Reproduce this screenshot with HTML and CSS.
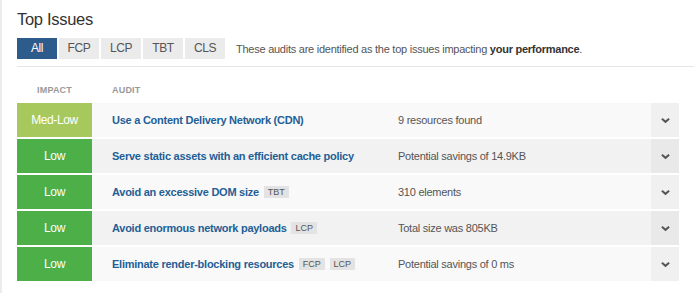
FILE: index.html
```html
<!DOCTYPE html>
<html lang="en">
<head>
    <meta charset="UTF-8">
    <meta name="viewport" content="width=device-width, initial-scale=1.0">
    <title>Top Issues</title>
    <link rel="stylesheet" href="styles.css">
</head>
<body>

    <!-- Top Issues panel -->
    <div class="panel">
        <h2>Top Issues</h2>

        <div class="filters">
            <div class="tabs">
                <span class="tab active">All</span>
                <span class="tab">FCP</span>
                <span class="tab">LCP</span>
                <span class="tab">TBT</span>
                <span class="tab">CLS</span>
            </div>
            <p class="note">These audits are identified as the top issues impacting <b>your performance</b>.</p>
        </div>

        <div class="divider"></div>

        <div class="issues">
            <div class="issue head">
                <span class="impact">Impact</span>
                <span class="audit">Audit</span>
                <span></span>
                <span></span>
            </div>

            <div class="issue">
                <span class="impact med-low">Med-Low</span>
                <span class="audit">Use a Content Delivery Network (CDN)</span>
                <span class="info">9 resources found</span>
                <span class="toggle"><svg viewBox="0 0 10 7"><path d="M1 1.5 L5 5 L9 1.5"/></svg></span>
            </div>

            <div class="issue">
                <span class="impact low">Low</span>
                <span class="audit">Serve static assets with an efficient cache policy</span>
                <span class="info">Potential savings of 14.9KB</span>
                <span class="toggle"><svg viewBox="0 0 10 7"><path d="M1 1.5 L5 5 L9 1.5"/></svg></span>
            </div>

            <div class="issue">
                <span class="impact low">Low</span>
                <span class="audit">Avoid an excessive DOM size <i class="chip">TBT</i></span>
                <span class="info">310 elements</span>
                <span class="toggle"><svg viewBox="0 0 10 7"><path d="M1 1.5 L5 5 L9 1.5"/></svg></span>
            </div>

            <div class="issue">
                <span class="impact low">Low</span>
                <span class="audit">Avoid enormous network payloads <i class="chip">LCP</i></span>
                <span class="info">Total size was 805KB</span>
                <span class="toggle"><svg viewBox="0 0 10 7"><path d="M1 1.5 L5 5 L9 1.5"/></svg></span>
            </div>

            <div class="issue">
                <span class="impact low">Low</span>
                <span class="audit">Eliminate render-blocking resources <i class="chip">FCP</i> <i class="chip">LCP</i></span>
                <span class="info">Potential savings of 0 ms</span>
                <span class="toggle"><svg viewBox="0 0 10 7"><path d="M1 1.5 L5 5 L9 1.5"/></svg></span>
            </div>
        </div>
    </div>

</body>
</html>
```

FILE: styles.css
```css
* {
    margin: 0;
    padding: 0;
    box-sizing: border-box;
    font-family: "Liberation Sans", Arial, sans-serif;
}
body {
    background: #fff;
    color: #333;
}

/* Panel */
.panel {
    border-left: 2px solid #ececec;
    min-height: 293px;
    padding: 8px 0 0 15px;
}
h2 {
    font-size: 16.5px;
    font-weight: normal;
    letter-spacing: -0.3px;
    color: #333;
    line-height: 22px;
    margin-bottom: 8px;
}

/* Filter tabs */
.filters {
    display: flex;
    align-items: center;
    gap: 11px;
}
.tabs {
    display: flex;
    gap: 2px;
}
.tab {
    width: 40px;
    height: 21px;
    line-height: 21px;
    text-align: center;
    font-size: 12px;
    letter-spacing: -0.4px;
    color: #555;
    background: #ebebeb;
}
.tab.active {
    background: #2c5b8c;
    color: #fff;
}
.note {
    font-size: 11px;
    letter-spacing: -0.25px;
    color: #555;
}
.note b {
    color: #333;
}
.divider {
    height: 1px;
    background: #e6e6e6;
    margin-top: 7px;
}

/* Issues table */
.issues {
    width: 662px;
    display: flex;
    flex-direction: column;
    gap: 2px;
}
.issue {
    display: grid;
    grid-template-columns: 75px 286px 1fr 28px;
    height: 34px;
    align-items: center;
    background: #f9f9f9;
    font-size: 11px;
    letter-spacing: -0.25px;
}
.issue:nth-child(odd) {
    background: #f2f2f2;
}
.issue.head {
    background: #fff;
    height: 34px;
    align-items: end;
    padding-bottom: 6px;
    font-size: 9px;
    font-weight: bold;
    color: #999;
    text-transform: uppercase;
    letter-spacing: 0.2px;
}
.impact {
    height: 100%;
    display: flex;
    align-items: center;
    justify-content: center;
    font-size: 12px;
    letter-spacing: -0.4px;
    color: #fff;
}
.head .impact {
    height: auto;
    font-size: 9px;
    letter-spacing: 0.2px;
    color: #999;
}
.med-low { background: #a6c85c; }
.low { background: #4caf48; }
.audit {
    padding-left: 20px;
    font-weight: bold;
    color: #235f96;
    white-space: nowrap;
}
.head .audit {
    color: #999;
}
.chip {
    display: inline-block;
    font-style: normal;
    font-weight: normal;
    font-size: 9px;
    letter-spacing: 0;
    color: #555;
    background: #e3e3e3;
    padding: 1px 4px;
    margin-left: 2px;
    vertical-align: 1px;
}
.info {
    padding-left: 20px;
    color: #555;
}
.toggle {
    height: 100%;
    display: flex;
    align-items: center;
    justify-content: center;
    background: rgba(0, 0, 0, 0.035);
}
.head .toggle { background: none; }
.toggle svg {
    width: 9px;
    height: 7px;
    fill: none;
    stroke: #555;
    stroke-width: 2.2;
}
```
